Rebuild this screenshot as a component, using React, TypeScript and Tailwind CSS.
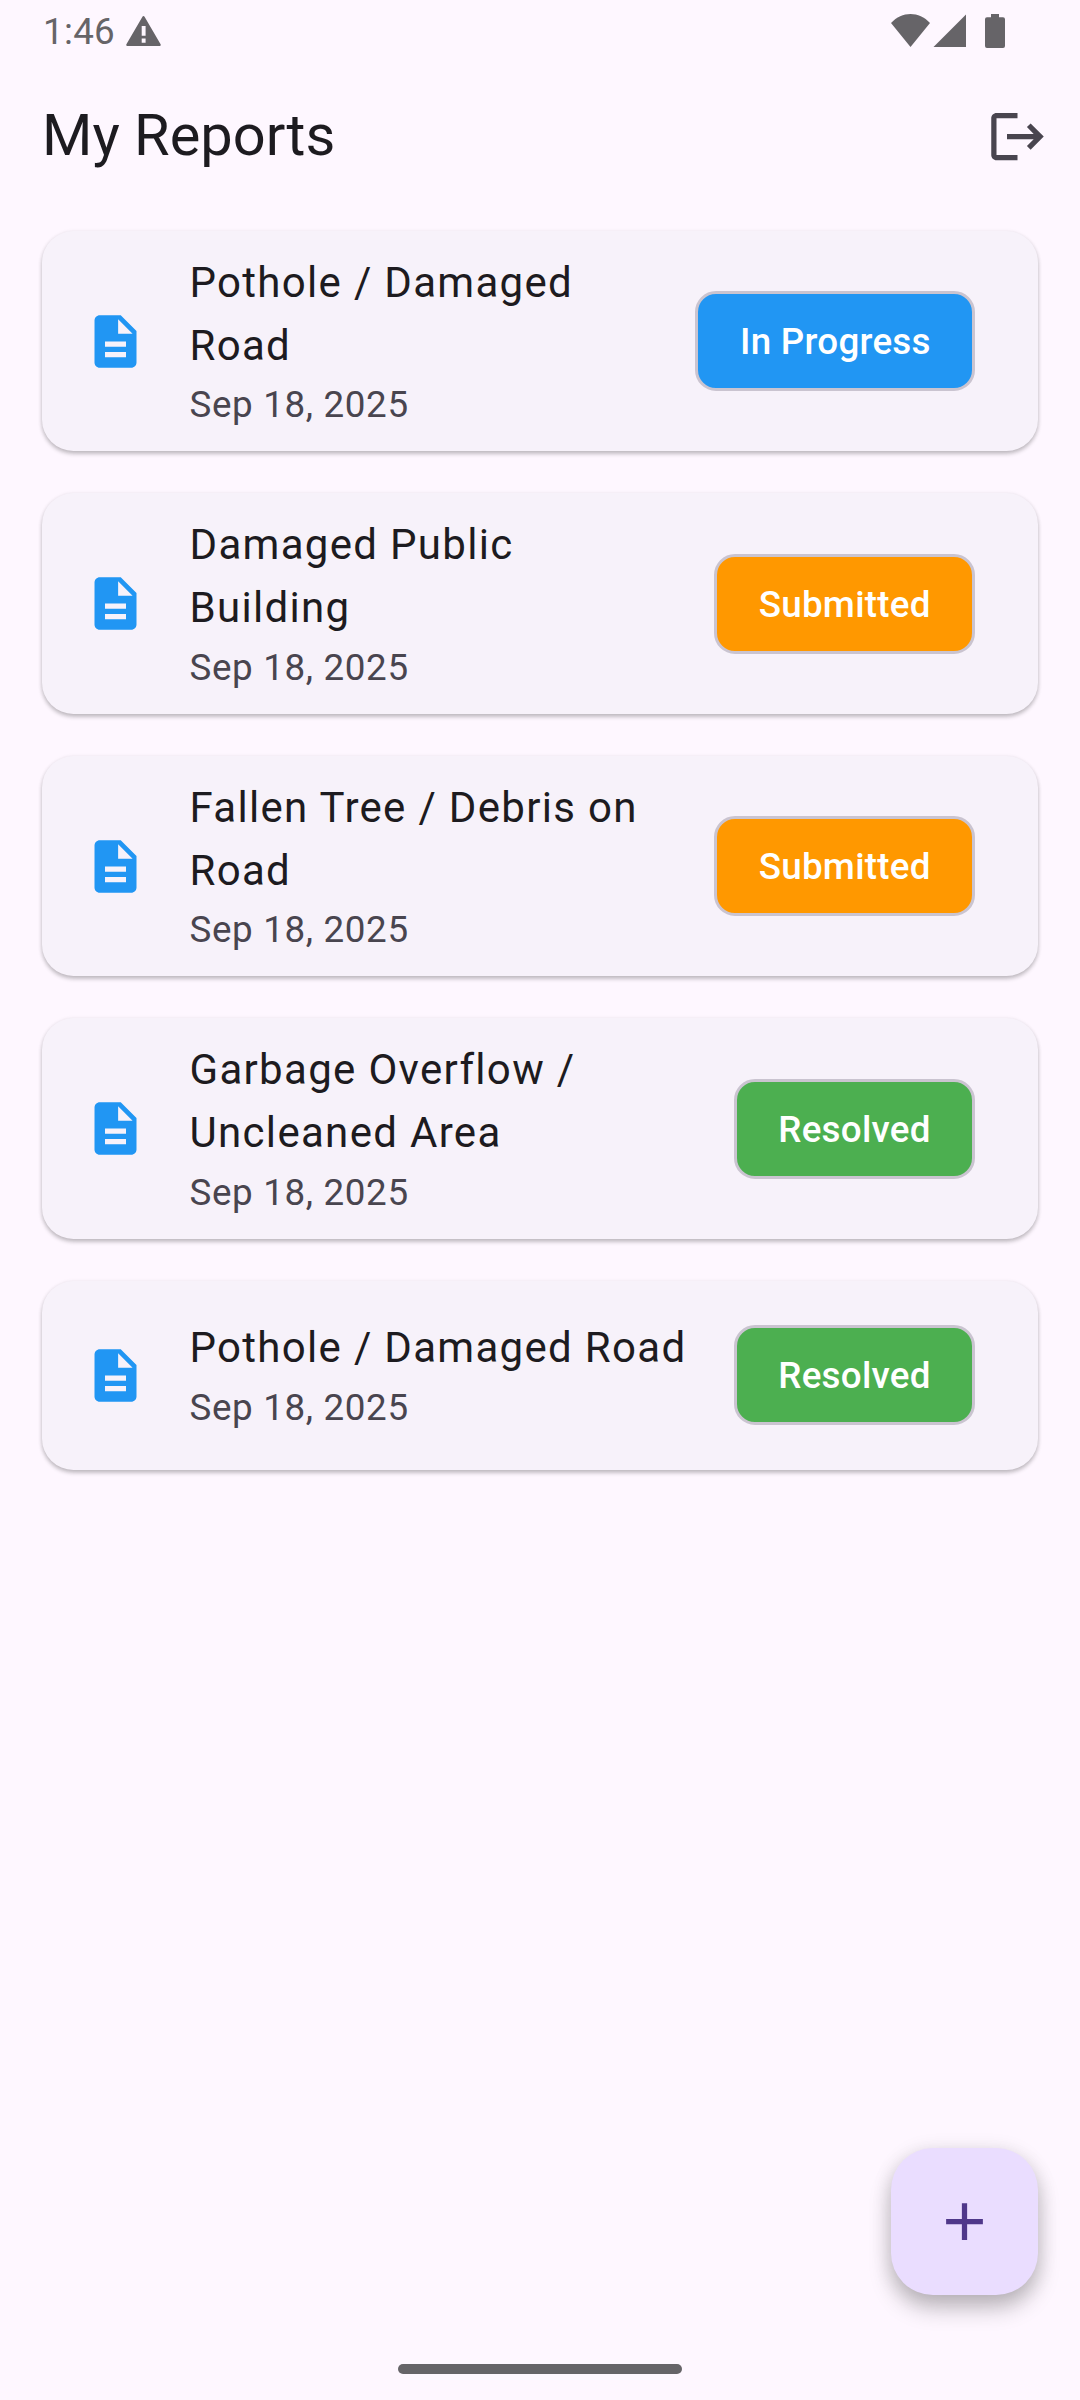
type Report = { title: string; date: string; status: keyof typeof statusColors };

const statusColors = {
  'In Progress': 'bg-[#2196f3]',
  Submitted: 'bg-[#ff9800]',
  Resolved: 'bg-[#4caf50]',
};

const reports: Report[] = [
  { title: 'Pothole / Damaged Road', date: 'Sep 18, 2025', status: 'In Progress' },
  { title: 'Damaged Public Building', date: 'Sep 18, 2025', status: 'Submitted' },
  { title: 'Fallen Tree / Debris on Road', date: 'Sep 18, 2025', status: 'Submitted' },
  { title: 'Garbage Overflow / Uncleaned Area', date: 'Sep 18, 2025', status: 'Resolved' },
  { title: 'Pothole / Damaged Road', date: 'Sep 18, 2025', status: 'Resolved' },
];

function Icon({ d, className }: { d: string; className: string }) {
  return (
    <svg viewBox="0 0 24 24" className={className} fill="currentColor">
      <path d={d} />
    </svg>
  );
}

function StatusBar() {
  return (
    <header className="flex h-[63px] items-start pl-[43px] pr-[75px] text-[#666468]">
      <span className="mt-[10px] w-[71px] text-[36.75px] leading-[43px] tracking-[0.3px]">1:46</span>
      <svg className="ml-[12px] mt-[16px] h-[30px] w-[35px]" viewBox="0 0 35 30" fill="currentColor" fillRule="evenodd">
        <path d="M17.5 0Q18.2 0 18.7.9L34.6 28.2Q35.2 30 33.6 30H1.4Q-.2 30 .4 28.2L16.3.9Q16.8 0 17.5 0ZM15.7 10v9.8h3.9V10ZM15.7 22.4v4.3h3.9v-4.3Z" />
      </svg>
      <div className="ml-auto mt-[14px] flex items-start">
        <svg className="h-[33px] w-[39px]" viewBox="0 0 39 33" fill="currentColor">
          <path d="M0 9C5.5 3 12.5 0 19.5 0S33.500 3 39 9L19.500 33Z" />
        </svg>
        <svg className="ml-[3px] h-[33px] w-[33px]" viewBox="0 0 33 33" fill="currentColor">
          <path d="M.5 33 33 .5V33Z" />
        </svg>
        <svg className="ml-[19px] h-[34px] w-[20px]" viewBox="0 0 20 34" fill="currentColor">
          <path d="M6 0h8v3.300h4Q20 3.300 20 5.300V32Q20 34 18 34H2Q0 34 0 32V5.300Q0 3.300 2 3.300H6Z" />
        </svg>
      </div>
    </header>
  );
}

function ReportCard({ title, date, status }: Report) {
  return (
    <li className="flex min-h-[189.4px] items-center rounded-[31.5px] bg-[#f7f2fa] pb-[19.6px] pl-[42px] pr-[63px] pt-[20px] shadow-[0_3px_4px_rgba(0,0,0,0.2),0_1px_4px_rgba(0,0,0,0.1)]">
      <Icon
        className="size-[63px] shrink-0 text-[#2196f3]"
        d="M14 2H6c-1.100 0-1.990.9-1.990 2L4 20c0 1.100.890 2 1.990 2H18c1.100 0 2-.9 2-2V8l-6-6zm2 16H8v-2h8v2zm0-4H8v-2h8v2zm-3-5V3.500L18.500 9H13z"
      />
      <div className="ml-[42.5px] min-w-0 flex-1">
        <h2 className="text-[42px] leading-[63px] tracking-[1.3125px] text-[#1d1b20]">{title}</h2>
        <p className="mt-[2.8px] text-[36.75px] leading-[52.5px] tracking-[0.656px] text-[#49454f]">{date}</p>
      </div>
      <span
        className={`ml-[41px] flex h-[100px] shrink-0 items-center rounded-[21px] border-[3px] border-[#cac4d0] pl-[41.7px] pr-[41.3px] pt-[2.6px] text-[36.75px] font-medium leading-[52.5px] tracking-[0.2625px] text-white ${statusColors[status]}`}
      >
        {status}
      </span>
    </li>
  );
}

export default function App() {
  return (
    <div className="relative flex h-[2400px] w-[1080px] flex-col overflow-hidden bg-[#fef7ff] font-['Roboto',sans-serif]">
      <StatusBar />
      <div className="flex h-[147px] items-center justify-between pl-[42px] pr-[31.5px]">
        <h1 className="pb-[2px] text-[57.75px] leading-[73.5px] text-[#1d1b20]">My Reports</h1>
        <button aria-label="Log out">
          <Icon
            className="size-[63px] text-[#49454f]"
            d="M17 7l-1.410 1.410L18.170 11H8v2h10.170l-2.580 2.580L17 17l5-5zM4 5h8V3H4c-1.100 0-2 .9-2 2v14c0 1.100.9 2 2 2h8v-2H4V5z"
          />
        </button>
      </div>
      <ul className="flex flex-col gap-[41.6px] px-[42px] pt-[20.6px]">
        {reports.map((r, i) => (
          <ReportCard key={i} {...r} />
        ))}
      </ul>
      <button
        aria-label="New report"
        className="absolute bottom-[105px] right-[42px] flex size-[147px] items-center justify-center rounded-[42px] bg-[#eaddff] shadow-[0_14px_22px_rgba(0,0,0,0.22),0_3px_20px_rgba(0,0,0,0.12)]"
      >
        <Icon className="size-[63px] text-[#4f378a]" d="M19 13h-6v6h-2v-6H5v-2h6V5h2v6h6v2z" />
      </button>
      <div className="mx-auto mb-[26px] mt-auto h-[10px] w-[284px] rounded-full bg-[#666468]" />
    </div>
  );
}
